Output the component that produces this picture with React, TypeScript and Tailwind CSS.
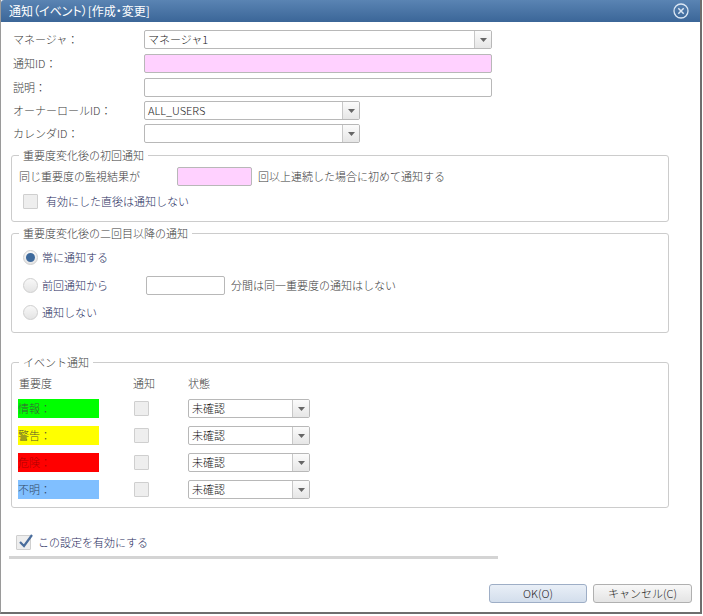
import React from 'react'

const arrow = (
  <svg width="7" height="4" viewBox="0 0 7 4">
    <path d="M0 0 L7 0 L3.5 4 Z" fill="#666" />
  </svg>
)

function Select({ value, width }: { value: string; width: string }) {
  return (
    <div className={`${width} h-[19px] flex border border-[#b8b8b8] rounded-[2px] bg-white overflow-hidden`}>
      <div className="flex-1 flex items-center pl-[3px] text-[11px] text-[#222]">{value}</div>
      <div className="w-[17px] flex items-center justify-center border-l border-[#c8c8c8] bg-gradient-to-b from-[#fbfbfb] to-[#e6e6e6]">
        {arrow}
      </div>
    </div>
  )
}

function Input({ className }: { className: string }) {
  return <div className={`h-[19px] border border-[#b8b8b8] rounded-[2px] ${className}`} />
}

function Check() {
  return <div className="w-[15px] h-[15px] border border-[#cfcfcf] bg-[#eeeeee] rounded-[1px]" />
}

function Radio({ on }: { on?: boolean }) {
  return (
    <div className="w-[15px] h-[15px] rounded-full border border-[#cfcfcf] bg-gradient-to-b from-[#f8f8f8] to-[#e4e4e4] flex items-center justify-center">
      {on && <div className="w-[9px] h-[9px] rounded-full bg-[#3e6a9c]" />}
    </div>
  )
}

const levels = [
  { name: '情報：', bg: 'bg-[#00ff00]', fg: 'text-[#3a5a3a]' },
  { name: '警告：', bg: 'bg-[#ffff00]', fg: 'text-[#555530]' },
  { name: '危険：', bg: 'bg-[#ff0000]', fg: 'text-[#b00000]' },
  { name: '不明：', bg: 'bg-[#80bfff]', fg: 'text-[#334a66]' },
]

export default function App() {
  return (
    <div className="w-[703px] h-[616px] bg-white font-['Noto_Sans_CJK_JP','Noto_Sans',sans-serif] font-light text-[11px] text-[#3a3a3a]">
      <div className="w-[702px] h-[614px] flex flex-col border-l border-r-2 border-b-2 border-l-[#9a9a9a] border-r-[#6e6e6e] border-b-[#6e6e6e]">
        {/* title */}
        <div className="h-[22px] flex items-center justify-between pl-[8px] pr-[11px] bg-gradient-to-b from-[#5a84b3] to-[#3b6698] rounded-tl-[3px]">
          <span className="text-[12px] font-normal text-white leading-none [font-feature-settings:'palt']">通知（イベント）[作成・変更]</span>
          <svg width="16" height="16" viewBox="0 0 16 16">
            <circle cx="8" cy="8" r="7" fill="none" stroke="#dbe7f4" strokeWidth="1.3" />
            <path d="M5.3 5.3 L10.7 10.7 M10.7 5.3 L5.3 10.7" stroke="#dbe7f4" strokeWidth="1.5" />
          </svg>
        </div>

        <div className="flex flex-col pl-[10px] pt-[8px]">
          <div className="flex items-center h-[19px]">
            <span className="w-[133px] pl-[2px]">マネージャ：</span>
            <Select value="マネージャ1" width="w-[348px]" />
          </div>
          <div className="flex items-center h-[19px] mt-[5px]">
            <span className="w-[133px] pl-[2px]">通知ID：</span>
            <Input className="w-[348px] bg-[#ffd1ff]" />
          </div>
          <div className="flex items-center h-[19px] mt-[5px]">
            <span className="w-[133px] pl-[2px]">説明：</span>
            <Input className="w-[348px] bg-white" />
          </div>
          <div className="flex items-center h-[19px] mt-[4px]">
            <span className="w-[133px] pl-[2px]">オーナーロールID：</span>
            <Select value="ALL_USERS" width="w-[216px]" />
          </div>
          <div className="flex items-center h-[19px] mt-[4px]">
            <span className="w-[133px] pl-[2px]">カレンダID：</span>
            <Select value="" width="w-[216px]" />
          </div>

          {/* first notification */}
          <fieldset className="w-[658px] mt-[4px] border border-[#cccccc] rounded-[3px] pl-[7px] pt-[4px] pb-[12px]">
            <legend className="px-[4px] leading-[16px]">重要度変化後の初回通知</legend>
            <div className="flex items-center h-[19px]">
              <span className="w-[158px]">同じ重要度の監視結果が</span>
              <Input className="w-[75px] bg-[#ffd1ff]" />
              <span className="ml-[6px]">回以上連続した場合に初めて通知する</span>
            </div>
            <div className="flex items-center h-[15px] mt-[8px] pl-[4px] gap-[8px]">
              <Check />
              <span className="text-[#1e2a5c]">有効にした直後は通知しない</span>
            </div>
          </fieldset>

          {/* second+ notification */}
          <fieldset className="w-[658px] mt-[3px] border border-[#cccccc] rounded-[3px] pl-[7px] pt-[6px] pb-[10px]">
            <legend className="px-[4px] leading-[16px]">重要度変化後の二回目以降の通知</legend>
            <div className="flex items-center h-[20px] pl-[4px] gap-[4px]">
              <Radio on />
              <span className="text-[#1e2a5c]">常に通知する</span>
            </div>
            <div className="flex items-center h-[20px] mt-[8px] pl-[4px]">
              <Radio />
              <span className="ml-[4px] w-[104px] text-[#1e2a5c]">前回通知から</span>
              <Input className="w-[79px] bg-white" />
              <span className="ml-[6px]">分間は同一重要度の通知はしない</span>
            </div>
            <div className="flex items-center h-[20px] mt-[7px] pl-[4px] gap-[4px]">
              <Radio />
              <span className="text-[#1e2a5c]">通知しない</span>
            </div>
          </fieldset>

          {/* event notification */}
          <fieldset className="w-[658px] mt-[21px] border border-[#cccccc] rounded-[3px] pl-[6px] pt-[5px] pb-[8px]">
            <legend className="ml-[1px] px-[4px] leading-[16px]">イベント通知</legend>
            <div className="flex items-center h-[16px]">
              <span className="w-[115px] pl-[1px]">重要度</span>
              <span className="w-[55px]">通知</span>
              <span>状態</span>
            </div>
            {levels.map((l, i) => (
              <div key={i} className="flex items-center h-[19px] mt-[8px] first-of-type:mt-[9px]">
                <div className={`w-[81px] h-[19px] flex items-center ${l.bg} ${l.fg}`}>{l.name}</div>
                <div className="w-[89px] pl-[35px]">
                  <Check />
                </div>
                <Select value="未確認" width="w-[122px]" />
              </div>
            ))}
          </fieldset>

          <div className="flex items-center h-[15px] mt-[27px] pl-[5px] gap-[7px]">
            <div className="relative w-[15px] h-[15px] border border-[#cfcfcf] bg-[#eeeeee] rounded-[1px]">
              <svg className="absolute -top-[3px] left-[1px]" width="16" height="16" viewBox="0 0 16 16">
                <path d="M2 9 L6 13 L14 2" fill="none" stroke="#4a6d9c" strokeWidth="2.2" />
              </svg>
            </div>
            <span className="text-[#1e2a5c]">この設定を有効にする</span>
          </div>
        </div>

        <div className="ml-[8px] mt-[6px] w-[489px] h-[3px] bg-[#d4d4d4]" />

        <div className="flex justify-end gap-[6px] pr-[8px] mt-[25px]">
          <button className="w-[98px] h-[19px] flex items-center justify-center border border-[#9eaec6] rounded-[3px] bg-gradient-to-b from-[#e9eff7] to-[#d3deec] text-[11px] text-[#222]">
            OK(O)
          </button>
          <button className="w-[99px] h-[19px] flex items-center justify-center border border-[#b0b0b0] rounded-[3px] bg-gradient-to-b from-[#f8f8f8] to-[#e4e4e4] text-[11px] text-[#222]">
            キャンセル(C)
          </button>
        </div>
      </div>
    </div>
  )
}
